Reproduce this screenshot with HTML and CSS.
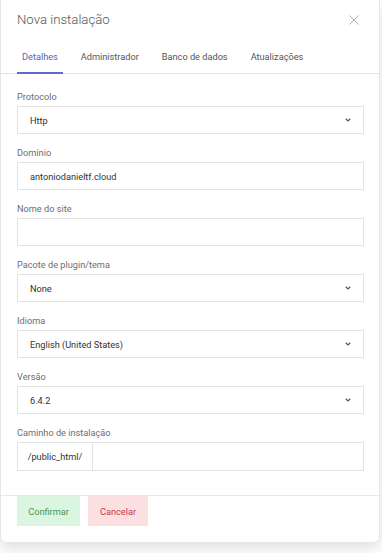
FILE: index.html
```html
<!DOCTYPE html>
<html lang="pt">
<head>
<meta charset="utf-8">
<title>Nova instalação</title>
<link rel="stylesheet" href="styles.css">
</head>
<body>
<div class="modal">
  <div class="header">
    <h1 class="title">Nova instalação</h1>
    <button class="close" aria-label="Fechar">
      <svg width="10" height="10" viewBox="0 0 10 10"><path d="M0.5 0.5 L9.5 9.5 M9.5 0.5 L0.5 9.5" stroke="#ababab" stroke-width="1" fill="none"/></svg>
    </button>
  </div>
  <div class="tabs">
    <div class="tab active">Detalhes</div>
    <div class="tab">Administrador</div>
    <div class="tab">Banco de dados</div>
    <div class="tab">Atualizações</div>
  </div>
  <div class="body">
    <div class="field">
      <div class="label">Protocolo</div>
      <div class="input select"><span>Http</span><svg class="chev" width="6" height="4" viewBox="0 0 6 4"><path d="M0.7 0.8 L3 3 L5.3 0.8" stroke="#555" stroke-width="1.2" fill="none"/></svg></div>
    </div>
    <div class="field">
      <div class="label">Domínio</div>
      <div class="input"><span>antoniodanieltf.cloud</span></div>
    </div>
    <div class="field">
      <div class="label">Nome do site</div>
      <div class="input"></div>
    </div>
    <div class="field">
      <div class="label">Pacote de plugin/tema</div>
      <div class="input select"><span>None</span><svg class="chev" width="6" height="4" viewBox="0 0 6 4"><path d="M0.7 0.8 L3 3 L5.3 0.8" stroke="#555" stroke-width="1.2" fill="none"/></svg></div>
    </div>
    <div class="field">
      <div class="label">Idioma</div>
      <div class="input select"><span>English (United States)</span><svg class="chev" width="6" height="4" viewBox="0 0 6 4"><path d="M0.7 0.8 L3 3 L5.3 0.8" stroke="#555" stroke-width="1.2" fill="none"/></svg></div>
    </div>
    <div class="field">
      <div class="label">Versão</div>
      <div class="input select"><span>6.4.2</span><svg class="chev" width="6" height="4" viewBox="0 0 6 4"><path d="M0.7 0.8 L3 3 L5.3 0.8" stroke="#555" stroke-width="1.2" fill="none"/></svg></div>
    </div>
    <div class="field">
      <div class="label">Caminho de instalação</div>
      <div class="group">
        <div class="prefix">/public_html/</div>
        <div class="grow"></div>
      </div>
    </div>
  </div>
  <div class="footer">
    <button class="btn confirm">Confirmar</button>
    <button class="btn cancel">Cancelar</button>
  </div>
</div>
</body>
</html>
```
FILE: styles.css
```css
* { box-sizing: border-box; }
html, body { margin: 0; padding: 0; }
body {
  background: #ffffff;
  font-family: Roboto, "Liberation Sans", Arial, sans-serif;
  width: 382px;
  height: 553px;
  overflow: hidden;
}
.modal {
  width: 380px;
  background: #fff;
  border: 1px solid #e6e6e6;
  border-top: none;
  border-radius: 0 0 6px 6px;
  box-shadow: 0 6px 14px rgba(0,0,0,0.12);
  height: 543px;
  display: flex;
  flex-direction: column;
}
.header {
  display: flex;
  align-items: center;
  justify-content: space-between;
  padding: 10px 20px 0 16px;
  height: 30px;
}
.title {
  margin: 0;
  font-size: 13.2px;
  font-weight: 300;
  color: #555;
  line-height: 20px;
}
.close {
  border: none;
  background: none;
  padding: 0;
  width: 10px;
  height: 10px;
  display: flex;
}
.tabs {
  display: flex;
  gap: 13px;
  padding: 0 16px;
  margin-top: 12px;
  border-bottom: 1px solid #e4e4e4;
}
.tab {
  font-size: 9.2px;
  color: #555;
  padding: 8px 5px 8px;
  line-height: 14px;
  border-bottom: 2px solid transparent;
  margin-bottom: -1px;
}
.tab.active {
  color: #5563c1;
  border-bottom-color: #5f6bc8;
}
.body {
  padding: 16px 16px 3px;
  flex: 1;
}
.field { margin-bottom: 12px; }
.label {
  font-size: 9.2px;
  color: #6e6e6e;
  line-height: 14px;
  margin-bottom: 2px;
}
.input {
  height: 28px;
  width: 347px;
  border: 1px solid #e3e3e3;
  display: flex;
  align-items: center;
  justify-content: space-between;
  padding: 0 12px 0 12px;
  font-size: 9.2px;
  color: #333;
}
.chev { display: block; }
.group {
  display: flex;
  width: 347px;
  height: 29px;
  border: 1px solid #e3e3e3;
}
.prefix {
  width: 75px;
  border-right: 1px solid #e3e3e3;
  display: flex;
  align-items: center;
  justify-content: center;
  font-size: 9.2px;
  color: #333;
}
.grow { flex: 1; }
.footer {
  border-top: 1px solid #e8e8e8;
  padding: 0 16px 16px;
  display: flex;
  gap: 8px;
}
.btn {
  border: none;
  height: 30px;
  padding: 0;
  font-family: inherit;
  font-size: 9.2px;
}
.confirm { background: #dcf5e1; color: #3f9a55; width: 63px; }
.cancel { background: #fbdfe1; color: #c73b4c; width: 60px; }
```
